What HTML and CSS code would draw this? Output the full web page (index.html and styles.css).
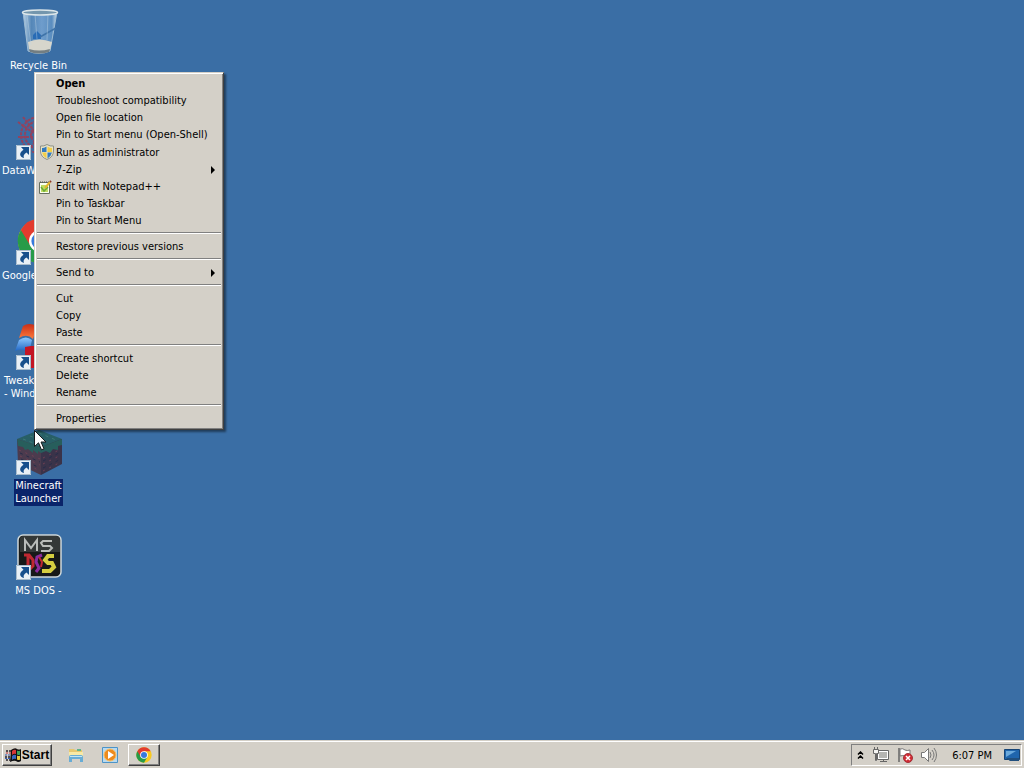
FILE: index.html
```html
<!DOCTYPE html>
<html lang="en">
<head>
<meta charset="utf-8">
<title>Desktop</title>
<link rel="stylesheet" href="styles.css">
</head>
<body>
<svg class="defs" aria-hidden="true">
  <defs>
    <symbol id="shortcut" viewBox="0 0 15 15">
      <path fill="#e9f0f6" d="M0 0h15v15H0z"/><path fill="none" stroke="#a9bccc" d="M.5.500h14v14H.5z"/>
      <path fill="#174f8c" d="M5 2h8v8l-2.500-2.500C8 9 7 10.500 8 13 3.500 12 2.500 8 7.500 4.800z"/>
    </symbol>
    <symbol id="chrome" viewBox="0 0 48 48">
      <circle cx="24" cy="24" r="23" fill="#f9c920"/>
      <path fill="#279b48" d="M4 12.500A23 23 0 0 0 24 47L34 30 24 24z"/>
      <path fill="#e23b2e" d="M24 24 14 29 4 12.500A23 23 0 0 1 44 12.500H24z"/>
      <circle cx="24" cy="24" r="11.500" fill="#fff"/><circle cx="24" cy="24" r="9" fill="#3679dc"/>
    </symbol>
  </defs>
</svg>
<main class="desktop">
  <nav class="icons" aria-label="Desktop icons">
    <button class="shortcut">
      <svg class="picture" viewBox="0 0 48 48">
        <defs><linearGradient id="glass"><stop stop-color="#b9d2e6"/><stop offset=".25" stop-color="#5587b8"/><stop offset=".55" stop-color="#6f9dcc"/><stop offset=".85" stop-color="#5a8dbf"/><stop offset="1" stop-color="#d1e0ea"/></linearGradient></defs>
        <path fill="url(#glass)" stroke="#9ebcd4" d="M8 4 13 43q11 5 22 0L42 4z"/>
        <path fill="#d7d6cc" d="M13 34q11-5 24 0l-2 8q-11 4-21 0z"/>
        <path fill="#737e82" d="m14 41 1 3q9 3 19 0l1-3q-11 3-21 0z"/>
        <path fill="#286bb5" d="m22 23 4 4v4h-8v-4z"/><path stroke="#3f73a8" stroke-width="1.500" d="M25 29 41 20"/>
        <path stroke="#c5d9e7" d="m12 7 4 30M20 6l2 25M33 6l-1 26" opacity=".4"/>
        <ellipse cx="25" cy="4.500" rx="17.500" ry="2.500" fill="#7396ad" stroke="#dce6e9" stroke-width="1.500"/>
      </svg>
      <span class="name">Recycle Bin</span>
    </button>
    <button class="shortcut">
      <svg class="picture" viewBox="0 0 48 48"><g fill="none" stroke="#91435f" stroke-width="2" stroke-dasharray="3 1"><path d="M24 2v44M3 9l42 30M3 24h42M8 4l32 40M40 4 8 44"/><circle cx="24" cy="22" r="18"/><circle cx="24" cy="22" r="14"/><circle cx="24" cy="22" r="8"/></g><use href="#shortcut" x="1" y="32" width="15" height="15"/></svg>
      <span class="name leading">DataW</span>
    </button>
    <button class="shortcut">
      <svg class="picture" viewBox="0 0 48 48"><use href="#chrome" x="2" y="0" width="46" height="46"/><use href="#shortcut" x="1" y="32" width="15" height="15"/></svg>
      <span class="name leading">Google</span>
    </button>
    <button class="shortcut">
      <svg class="picture" viewBox="0 0 48 48">
        <defs><linearGradient id="flagred" x2="0" y2="1"><stop stop-color="#c92f18"/><stop offset="1" stop-color="#ff7b3c"/></linearGradient><linearGradient id="flagblue" x2="0" y2="1"><stop stop-color="#8cc7ff"/><stop offset="1" stop-color="#1159bc"/></linearGradient></defs>
        <path fill="url(#flagred)" d="M8 3Q14-1 22 3l-4 13Q12 10 4 15z"/><path fill="url(#flagblue)" d="M4 17q7-5 13 0l-3 13Q7 24 0 28z"/><path fill="#c31524" d="M16 23h15v22H16V33h-6v-9z"/><use href="#shortcut" x="1" y="32" width="15" height="15"/>
      </svg>
      <span class="name leading wrapped">Tweak<br>- Wind</span>
    </button>
    <button class="shortcut">
      <svg class="picture" viewBox="0 0 48 48">
        <path fill="#285f66" d="m2 11 22-9 23 9-21 13z"/><path fill="#4b3b4e" d="m2 11 24 8v28L3 36z"/><path fill="#3a3349" d="m26 19 21-8v25L26 47z"/>
        <path fill="#275e5c" d="m2 11 24 8v6l-3-2v3l-5-4v3l-5-4-3 1-2-3-5-1zM26 19l21-8v6l-4 1v4l-5-1-3 4-4-2-5 2z"/>
        <g stroke="#704054" stroke-dasharray="2 5"><path d="m4 22 21 9M5 28l20 9M7 34l18 9M28 30l18-9M28 36l18-9M28 43l18-9"/></g>
        <g stroke="#262c49" stroke-dasharray="3 4"><path d="m5 25 20 9M6 31l19 9M28 33l18-9M28 40l18-9"/></g>
        <g stroke="#3d7974" stroke-dasharray="3 4"><path d="m8 11 18 7M15 8l20 7M24 5l17 7"/></g>
        <use href="#shortcut" x="1" y="32" width="15" height="15"/>
      </svg>
      <span class="name selected">Minecraft<br>Launcher</span>
    </button>
    <button class="shortcut">
      <svg class="picture" viewBox="0 0 48 48">
        <rect x="3" y="2" width="43" height="42" rx="5" fill="#171918" stroke="#cfd8da" stroke-width="1.500"/>
        <path fill="#343837" d="M5 6q0-3 3-3h33q4 0 4 4v12H5z"/>
        <g fill="none" stroke-width="2"><path stroke="#b9bcb9" d="M10 18V7l6 8 6-8v11M37 8h-9l-2 2 2 3h7l2 2-3 3h-8"/></g>
        <g fill="none" stroke-width="3"><path stroke="#bf2831" d="M9 22h5l4 5v6l-3 3H9M13 22v14"/><path stroke="#8b2c9f" d="m27 22-5 2-1 5 3 6-3 4"/><path stroke="#bf2831" stroke-width="2" d="m24 24 3 5-1 5"/><path stroke="#d5ce40" stroke-width="4" d="M39 23h-6l-3 4 3 3h4l2 4-4 4h-8"/></g>
        <use href="#shortcut" x="1" y="32" width="15" height="15"/>
      </svg>
      <span class="name">MS DOS -</span>
    </button>
  </nav>
  <div class="menu" role="menu">
    <button role="menuitem" class="item default"><span>Open</span></button>
    <button role="menuitem" class="item"><span>Troubleshoot compatibility</span></button>
    <button role="menuitem" class="item"><span>Open file location</span></button>
    <button role="menuitem" class="item"><span>Pin to Start menu (Open-Shell)</span></button>
    <button role="menuitem" class="item tall">
      <svg class="glyph" viewBox="0 0 16 16"><path fill="#e9e4c8" stroke="#8d9187" d="M8 .5q3 2 6.500 1.500V7q0 6-6.500 8.500Q1.500 13 1.500 7V2Q5 2.500 8 .5z"/><path fill="#347bbf" d="M7.500 2.500V8H3V4q2 0 4.500-1.500zM8.500 8.500H13q-1 4-4.500 6z"/><path fill="#f3ce47" d="M8.500 2.500Q11 4 13 4v4H8.500zM3 8.500h4.500v6Q4 12.500 3 8.500z"/></svg>
      <span>Run as administrator</span></button>
    <button role="menuitem" class="item" aria-haspopup="menu"><span>7-Zip</span><svg class="arrow" viewBox="0 0 4 8"><path d="M0 0v8l4-4z"/></svg></button>
    <button role="menuitem" class="item">
      <svg class="glyph edit" viewBox="0 0 16 16"><path fill="#fbfff1" stroke="#686f60" d="M2.500 3.500h10v11h-10z"/><path stroke="#555" stroke-dasharray="1 1" d="M3 3h10"/><path fill="#c0dc62" d="M4 6h7v7H4z"/><path fill="none" stroke="#6aaa39" stroke-width="1.500" d="m4 8 3 4 4-4"/><path stroke="#e6b72c" stroke-width="2" d="m8 9 5-6"/><path stroke="#8b3428" stroke-width="2" d="m13 3 1-1"/></svg>
      <span>Edit with Notepad++</span></button>
    <button role="menuitem" class="item"><span>Pin to Taskbar</span></button>
    <button role="menuitem" class="item"><span>Pin to Start Menu</span></button>
    <hr>
    <button role="menuitem" class="item"><span>Restore previous versions</span></button>
    <hr>
    <button role="menuitem" class="item" aria-haspopup="menu"><span>Send to</span><svg class="arrow" viewBox="0 0 4 8"><path d="M0 0v8l4-4z"/></svg></button>
    <hr>
    <button role="menuitem" class="item"><span>Cut</span></button>
    <button role="menuitem" class="item"><span>Copy</span></button>
    <button role="menuitem" class="item"><span>Paste</span></button>
    <hr>
    <button role="menuitem" class="item"><span>Create shortcut</span></button>
    <button role="menuitem" class="item"><span>Delete</span></button>
    <button role="menuitem" class="item"><span>Rename</span></button>
    <hr>
    <button role="menuitem" class="item"><span>Properties</span></button>
  </div>
  <svg class="pointer" viewBox="0 0 12 21"><path fill="#fff" stroke="#171a1c" d="M.5.500v16l4-3.700 3 7 2.500-1-3-6.800h5z"/></svg>
</main>
<footer class="taskbar">
  <button class="start">
    <svg class="flag" viewBox="0 0 17 16"><path fill="#111" d="M6 3q4-3 6-1 2 1 4 0v12q-3 2-5 0-2-1-6 1z"/><path fill="#d83637" d="M7 4q2-2 4-1v4Q9 6 7 8z"/><path fill="#3da15b" d="M12 3.500q2 1 3 0v4q-1 1-3 0z"/><path fill="#3866bd" d="M7 9q2-2 4-1v4q-2-1-4 1z"/><path fill="#e9c93e" d="M12 8.500q2 1 3 0v4q-1 1-3 0z"/><path stroke="#292329" stroke-width="1.500" stroke-dasharray="2 1" d="M1 4h5M0 10h6M1 13h5"/><path stroke="#c32f39" stroke-dasharray="2 1" d="M1 6h5"/><path stroke="#355bb5" stroke-dasharray="2 1" d="M0 8h6M0 11.500h6"/></svg>
    <span>Start</span>
  </button>
  <button class="launch" aria-label="File Explorer"><svg class="small" viewBox="0 0 16 16"><path fill="#e7c86f" d="M1 2h5l1 1h7v9H1z"/><path fill="#f8e9a5" d="M1 5h14v7H1z"/><path fill="#62b58d" d="M9 2h4v2H9z"/><path fill="#68acd5" d="M1 10q0-2 2-2h10q2 0 2 2v5h-3v-3H4v3H1z"/><path stroke="#c2e4f1" d="M2 9.500h12"/></svg></button>
  <button class="launch" aria-label="Media Player"><svg class="small" viewBox="0 0 16 16"><path fill="#b9daf0" stroke="#4c94c8" d="M.5.500h15v15H.5z"/><circle cx="8" cy="8" r="6" fill="#ed8b1d" stroke="#f7bd62"/><path fill="#fff" d="M6 4v8l6-4z"/></svg></button>
  <button class="launch running" aria-label="Google Chrome"><svg class="small" viewBox="0 0 48 48"><use href="#chrome"/></svg></button>
  <div class="tray">
    <button class="status" aria-label="Show hidden icons"><svg class="chevrons" viewBox="0 0 7 8"><path fill="none" stroke="#000" stroke-width="1.500" d="m1 3.500 2.500-2.500L6 3.500m-5 4L3.500 5 6 7.500"/></svg></button>
    <button class="status" aria-label="Network"><svg class="small" viewBox="0 0 16 16"><path fill="#fff" stroke="#666" d="M4.500 3.500h11v9h-11z"/><path fill="#b5b5b2" d="M6 5h8v6H6z"/><path stroke="#666" d="M7 14.500h7M10.500 12v2"/><path fill="#f4f4f2" stroke="#666" d="M.5 2.500h5v4h-2v7h-1v-7h-2zM1.500 0v2M4.500 0v2"/></svg></button>
    <button class="status" aria-label="Action Center"><svg class="small" viewBox="0 0 16 16"><path stroke="#666" stroke-width="1.500" d="M2 1v14"/><path fill="#fff" stroke="#777" d="M3 2q3-1 5 1 2 1 5 0v7q-3 1-5-1-2-1-5 0z"/><circle cx="11" cy="11" r="4.500" fill="#d22c35" stroke="#a2333a"/><path stroke="#fff" stroke-width="1.500" d="m9 9 4 4m0-4-4 4"/></svg></button>
    <button class="status" aria-label="Volume"><svg class="small" viewBox="0 0 16 16"><path fill="#fff" stroke="#777" d="M.5 5.500h3l4-4v13l-4-4h-3z"/><path fill="none" stroke="#777" d="M9 5q2 3 0 6M11 3q4 5 0 10M13 1q5 7 0 14"/></svg></button>
    <time class="clock">6:07 PM</time>
    <button class="status" aria-label="Show desktop"><svg class="small" viewBox="0 0 16 16"><path fill="#1f65ad" stroke="#174475" d="M.5 2.500h15v10H.5z"/><path fill="#6ba9dc" d="M2 4h10L2 10z"/><path fill="#214f7d" d="M2 11h13v3H6z"/></svg></button>
  </div>
</footer>
</body>
</html>
```
FILE: styles.css
```css
* { box-sizing: border-box; }
body {
  margin: 0;
  height: 100vh;
  display: flex;
  flex-direction: column;
  overflow: hidden;
  background: #3a6ea5;
  color: #000;
  font: 11px/13px Tahoma, "DejaVu Sans Condensed", "Noto Sans", sans-serif;
}
button { margin: 0; padding: 0; border: 0; background: none; color: inherit; font: inherit; }
svg { display: block; flex: none; }
.defs { position: absolute; width: 0; height: 0; }
.desktop { position: relative; flex: 1; min-height: 0; }
.icons { width: 77px; padding-top: 8px; display: grid; grid-auto-rows: 105px; }
.shortcut { display: flex; flex-direction: column; align-items: center; justify-content: flex-start; gap: 3px; color: #fff; }
.picture { width: 48px; height: 48px; }
.name { padding: 0 1px 1px; white-space: nowrap; }
.leading { align-self: flex-start; padding-left: 2px; text-align: left; }
.wrapped { padding-left: 4px; }
.selected { background: #0a246a; text-align: left; }
.menu {
  position: absolute;
  left: 34px;
  top: 72px;
  width: 190px;
  padding: 2px;
  border: 1px solid;
  border-color: #d4d0c8 #404040 #404040 #d4d0c8;
  background: #d4d0c8;
  box-shadow: inset 1px 1px #fff, inset -1px -1px #808080, 2px 2px 2px rgba(0, 0, 0, .45);
}
.item { position: relative; display: flex; align-items: center; width: 100%; height: 17px; padding: 0 6px 0 19px; white-space: nowrap; }
.tall { height: 18px; }
.default { font-weight: bold; }
.glyph { position: absolute; left: 2px; width: 16px; height: 16px; }
.edit { left: 0; }
.arrow { width: 4px; height: 8px; margin-left: auto; }
hr { height: 2px; margin: 3px 0 4px; border: 0; border-top: 1px solid #808080; border-bottom: 1px solid #fff; }
.pointer { position: absolute; left: 34px; top: 430px; width: 12px; height: 21px; }
.taskbar { display: flex; align-items: center; height: 28px; padding: 1px 2px 0; border-top: 1px solid #d4d0c8; background: #d4d0c8; box-shadow: inset 0 1px #fff; }
.start, .running { border: 1px solid; border-color: #fff #404040 #404040 #fff; box-shadow: inset -1px -1px #808080; }
.start { display: flex; align-items: center; justify-content: center; width: 50px; height: 22px; margin-right: 8px; font: bold 12px/13px "Liberation Sans", sans-serif; }
.flag { width: 17px; height: 16px; }
.small { width: 16px; height: 16px; }
.launch { display: grid; place-items: center; width: 32px; height: 22px; margin-right: 2px; }
.tray { display: flex; align-items: center; gap: 8px; height: 22px; margin-left: auto; padding: 0 1px 0 5px; border: 1px solid; border-color: #808080 #fff #fff #808080; }
.chevrons { width: 7px; height: 8px; margin-right: 1px; }
.clock { padding: 0 4px 0 7px; }
```
